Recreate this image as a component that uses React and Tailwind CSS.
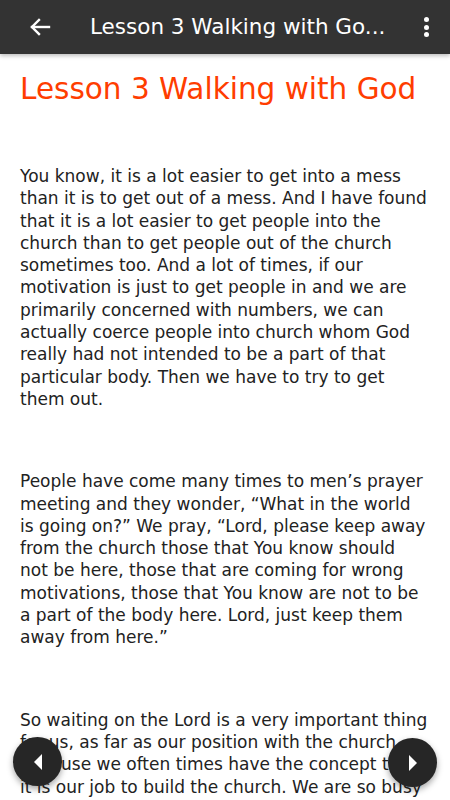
import React from "react";

const FONT = { fontFamily: '"DejaVu Sans", "Noto Sans", sans-serif' };

const paragraphs = [
  [
    "You know, it is a lot easier to get into a mess",
    "than it is to get out of a mess. And I have found",
    "that it is a lot easier to get people into the",
    "church than to get people out of the church",
    "sometimes too. And a lot of times, if our",
    "motivation is just to get people in and we are",
    "primarily concerned with numbers, we can",
    "actually coerce people into church whom God",
    "really had not intended to be a part of that",
    "particular body. Then we have to try to get",
    "them out.",
  ],
  [
    "People have come many times to men’s prayer",
    "meeting and they wonder, “What in the world",
    "is going on?” We pray, “Lord, please keep away",
    "from the church those that You know should",
    "not be here, those that are coming for wrong",
    "motivations, those that You know are not to be",
    "a part of the body here. Lord, just keep them",
    "away from here.”",
  ],
  [
    "So waiting on the Lord is a very important thing",
    "for us, as far as our position with the church",
    "because we often times have the concept that",
    "it is our job to build the church. We are so busy",
  ],
];

function BackArrow() {
  return (
    <svg width="22" height="18" viewBox="0 0 22 18" fill="none" stroke="white" strokeWidth="2.4" strokeLinecap="square">
      <path d="M3 9H20" />
      <path d="M10 2L3 9L10 16" />
    </svg>
  );
}

function Kebab() {
  return (
    <div className="flex flex-col items-center gap-[2.6px]">
      <span className="block h-[5px] w-[5px] rounded-full bg-white" />
      <span className="block h-[5px] w-[5px] rounded-full bg-white" />
      <span className="block h-[5px] w-[5px] rounded-full bg-white" />
    </div>
  );
}

function NavButton({ dir, className }) {
  return (
    <button
      className={
        "absolute flex h-[49px] w-[49px] items-center justify-center rounded-full bg-[#262626] shadow-[0_3px_6px_rgba(0,0,0,0.35)] " +
        className
      }
    >
      <svg width="10" height="16" viewBox="0 0 10 16">
        {dir === "left" ? (
          <polygon points="9,0 1,8 9,16" fill="white" />
        ) : (
          <polygon points="1,0 9,8 1,16" fill="white" />
        )}
      </svg>
    </button>
  );
}

export default function App() {
  return (
    <div className="relative flex h-screen w-full flex-col overflow-hidden bg-white" style={FONT}>
      {/* toolbar */}
      <header className="relative z-10 flex h-[54px] shrink-0 items-center bg-[#333333] shadow-[0_2px_4px_rgba(0,0,0,0.25)]">
        <div className="flex w-[90px] shrink-0 items-center pl-[29px]">
          <BackArrow />
        </div>
        <h2 className="flex-1 truncate text-[21.5px] text-white">Lesson 3 Walking with Go...</h2>
        <div className="flex w-[56px] shrink-0 justify-center pl-[8px]">
          <Kebab />
        </div>
      </header>

      {/* lesson body */}
      <main className="flex-1 overflow-hidden px-5 pt-[17px] text-[#222222]">
        <h1 className="text-[29.5px] leading-[36px] text-[#ff3d00]">Lesson 3 Walking with God</h1>
        {paragraphs.map((lines, i) => (
          <p
            key={i}
            className={
              (i === 0 ? "mt-[58px]" : "mt-[60px]") + " whitespace-nowrap text-[17px] leading-[22.3px]"
            }
          >
            {lines.map((line, j) => (
              <span key={j} className="block">
                {line}
              </span>
            ))}
          </p>
        ))}
      </main>

      <NavButton dir="left" className="bottom-[14px] left-[13px]" />
      <NavButton dir="right" className="bottom-[13px] right-[13px]" />
    </div>
  );
}
